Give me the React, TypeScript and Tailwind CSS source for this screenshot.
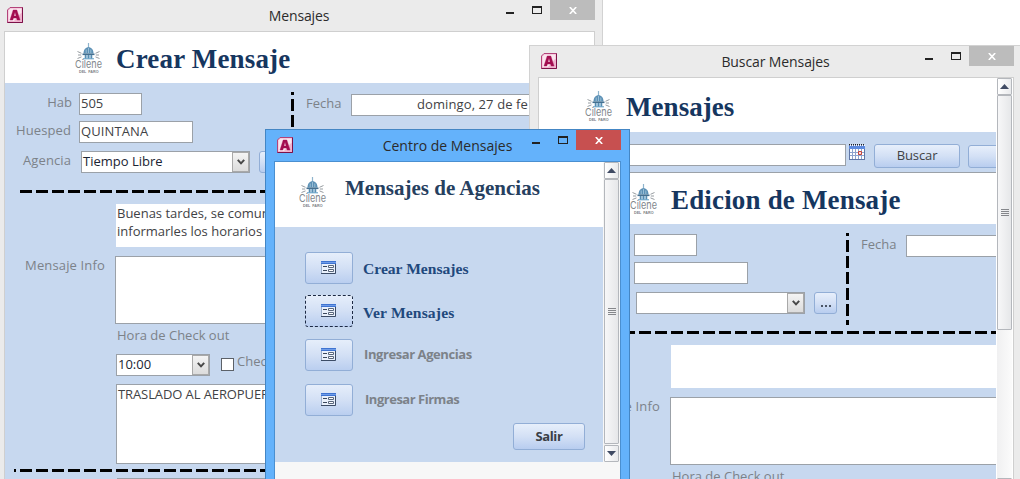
import type { ReactNode } from "react";

const ui = "font-['Open_Sans','Noto_Sans',sans-serif]";
const serif = "font-['Liberation_Serif','Times_New_Roman',serif] font-bold text-[#16365f]";
const box = "shrink-0 border border-[#9ba1a8] bg-white";
const btnFill = "shrink-0 rounded-[3px] border bg-gradient-to-b from-[#e7effb] via-[#d3e0f5] to-[#b8cdef]";
const btn = `${btnFill} border-[#92aed6]`;
const label = "whitespace-nowrap leading-[18px] text-[#7c8289]";

function AccessIcon() {
  return (
    <svg className="block size-4 shrink-0" viewBox="0 0 16 16">
      <path d="M3 .5h12.500v15H.5V3z" fill="#f0b4cf" stroke="#b3447a" />
      <path d="M3.500 1.500h11v4L7 14H1.500V3.500z" fill="#fbe6ef" />
      <path d="M15.500.5v15H.5" fill="none" stroke="#7c1148" />
      <path
        fillRule="evenodd"
        d="M3 13L6.200 3h3.600L13 13h-2.800l-.6-2H6.400l-.6 2zM6.900 9h2.200L8 5.200z"
        fill="#a30d50"
        stroke="#a30d50"
        strokeWidth=".4"
      />
    </svg>
  );
}

function Logo() {
  return (
    <svg className="block h-8 w-7 shrink-0 overflow-visible" viewBox="0 0 28 32">
      <path d="M13.500 1v5" stroke="#8fb4cd" strokeWidth="1.200" />
      <path d="M8.500 11.500C8.500 7.500 10.500 5.200 13.500 5.200s5 2.300 5 6.300z" fill="#5b90b5" />
      <path d="M11.200 11V7.500M13.500 11V6M15.800 11V7.500" stroke="#b5d3e4" strokeWidth=".7" />
      <path d="M7.500 12.300h12" stroke="#456f8f" strokeWidth="1.600" />
      <path d="M9.500 13h8v3.500h-8z" fill="#9dc0d8" />
      <path d="M10.500 13v3.500M13.500 13v3.500M16.500 13v3.500" stroke="#4f86ab" strokeWidth=".9" />
      <path d="M8 16.800h11" stroke="#5b9ac4" strokeWidth="1" />
      <path d="M2.500 9.500l4 1.800M3 13h3.200M2.500 16.500l4-1.600M24.500 9.500l-4 1.800M24 13h-3.200M24.500 16.500l-4-1.600" stroke="#8b9196" strokeWidth=".9" />
      <text x="0" y="26" textLength="27" lengthAdjust="spacingAndGlyphs" fontSize="11" fontFamily="Inter, sans-serif" fontWeight="400" fill="#82878c">
        Cilene
      </text>
      <text x="4" y="31.200" textLength="19.500" lengthAdjust="spacingAndGlyphs" fontSize="4.400" wordSpacing="1.200" fontWeight="700" fontFamily="Liberation Sans, sans-serif" fill="#7b8084">
        DEL FARO
      </text>
    </svg>
  );
}

function FormIcon() {
  return (
    <svg className="mr-px block h-[13px] w-[15px]" viewBox="0 0 15 13">
      <path d="M.5.5h14v12H.5z" fill="#eaf1fc" stroke="#9db0cd" />
      <path d="M0 0h15v3H0z" fill="#3f74d1" />
      <path d="M0 1h15v1H0z" fill="#6f9ce8" />
      <path d="M14.500 3v9.500H0" fill="none" stroke="#3c4c66" />
      <path d="M2 5.500h4M2 9.500h4" stroke="#3b485c" />
      <path d="M7.500 4.500h5v2h-5zM7.500 8.500h5v2h-5z" fill="#fff" stroke="#59677c" />
    </svg>
  );
}

function CalendarIcon() {
  return (
    <svg className="block size-4 shrink-0" viewBox="0 0 16 16">
      <path d="M0 1h16v15H0z" fill="#5f76a6" />
      <path d="M1 5h14v10H1z" fill="#fff" />
      <path d="M0 2h16v3H0z" fill="#5d8be0" />
      <path d="M0 .5h16" stroke="#222" strokeDasharray="1 1" />
      <path d="M1 1.500h15" stroke="#fff" strokeDasharray="1 1" />
      <path d="M1 8.500h14M1 11.500h14M3.500 5v10M6.500 5v10M9.500 5v10M12.500 5v10" stroke="#8da3cd" />
      <path d="M9.500 7.500h3v3h-3z" fill="#fbdcd8" stroke="#c9453a" />
    </svg>
  );
}

function Window({
  title,
  titleClass,
  frame,
  active = false,
  children,
}: {
  title: string;
  titleClass: string;
  frame: string;
  active?: boolean;
  children: ReactNode;
}) {
  return (
    <section
      className={`absolute flex flex-col border ${frame} ${
        active ? "border-[#4486c4] bg-[#64b2fb]" : "border-[#d2d2d2] bg-[#ebebeb]"
      }`}
    >
      <header className="grid h-[31px] shrink-0 grid-cols-[1fr_auto_1fr]">
        <div className="pl-[11px] pt-[7px]">
          <AccessIcon />
        </div>
        <h1 className={`whitespace-nowrap text-[14px] leading-[31px] text-[#2b2b2b] ${titleClass}`}>{title}</h1>
        <div className={`flex justify-end ${active ? "pr-2" : "pr-[7px]"}`}>
          <span className="mr-[18px] mt-3 h-[2px] w-2 bg-[#222]" />
          <span className="mr-2 mt-[6px] h-2 w-[10px] border border-t-2 border-[#222]" />
          <span className={`flex h-5 w-[45px] items-center justify-center ${active ? "bg-[#c75050]" : "bg-[#bcbcbc]"}`}>
            <svg className="block h-[7px] w-2" viewBox="0 0 8 7">
              <path d="M.8 0l6.400 7M7.200 0L.8 7" stroke="#fff" strokeWidth="1.600" />
            </svg>
          </span>
        </div>
      </header>
      <div
        className={`ml-2 flex min-h-0 flex-1 border border-b-0 ${
          active ? "mr-2 border-[#4a8fd0] bg-[#f7f7f7]" : "mr-[7px] border-[#cfcfcf] bg-white"
        }`}
      >
        {children}
      </div>
    </section>
  );
}

function ScrollArrow({ down = false }: { down?: boolean }) {
  return (
    <div className="flex h-[17px] shrink-0 items-center justify-center rounded-[1px] border border-[#b4b7bc] bg-gradient-to-r from-white to-[#e9eaec]">
      <svg className="block h-[5px] w-[9px]" viewBox="0 0 9 5">
        <path d={down ? "M0 0h9L4.500 5z" : "M0 5h9L4.500 0z"} fill="#3f4a63" />
      </svg>
    </div>
  );
}

function ScrollBar({ thumb, className }: { thumb: string; className: string }) {
  return (
    <div className={`flex w-[15px] shrink-0 flex-col bg-gradient-to-r from-[#f0f0f1] to-[#fbfbfb] ${className}`}>
      <ScrollArrow />
      <div
        className={`flex shrink-0 flex-col items-center justify-center gap-px rounded-[1px] border border-[#b4b7bc] bg-gradient-to-r from-[#f7f7f8] to-[#e6e7e9] ${thumb}`}
      >
        <span className="h-px w-2 bg-[#85878b]" />
        <span className="h-px w-2 bg-[#85878b]" />
        <span className="h-px w-2 bg-[#85878b]" />
        <span className="h-px w-2 bg-[#85878b]" />
      </div>
      <div className="flex-1" />
      <ScrollArrow down />
    </div>
  );
}

function Combo({ value, className }: { value: string; className: string }) {
  return (
    <div className={`${box} flex h-[22px] ${className}`}>
      <span className="flex-1 pl-px leading-[18px] text-[#1a2433]">{value}</span>
      <span className="flex w-[17px] items-center justify-center border border-[#a9a9a9] bg-gradient-to-b from-[#f4f4f4] to-[#dcdcdc]">
        <svg className="block h-[6px] w-2" viewBox="0 0 8 6">
          <path d="M.8 .8L4 4.300 7.200.8" fill="none" stroke="#484848" strokeWidth="2" />
        </svg>
      </span>
    </div>
  );
}

type FormProps = {
  title: string;
  room?: string;
  guest?: string;
  agency?: string;
  date?: string;
  message?: string[];
  checkout?: string;
  notes?: string;
};

function MessageForm({ title, room, guest, agency = "", date, message = [], checkout = "", notes }: FormProps) {
  return (
    <div className="flex h-[520px] w-[589px] shrink-0 flex-col bg-[#c7d8ef] text-[13px] text-[#3f4245]">
      <div className="flex h-[51px] shrink-0 bg-white pl-[70px] pt-[10px]">
        <Logo />
        <h2 className={`-mt-[10px] ml-[13px] whitespace-nowrap text-[27px] leading-[54px] tracking-[0.17px] ${serif}`}>
          {title}
        </h2>
      </div>

      <div className="flex h-[107px] shrink-0">
        <div className="w-[286px] pt-[10px]">
          <div className="flex">
            <span className={`${label} w-[67px] text-right`}>Hab</span>
            <div className={`${box} ml-[7px] h-[22px] w-[63px] pl-px leading-[18px]`}>{room}</div>
          </div>
          <div className="mt-[6px] flex">
            <span className={`${label} w-[66px] text-right tracking-[0.1px]`}>Huesped</span>
            <div className={`${box} ml-2 h-[22px] w-[114px] pl-px leading-[18px] tracking-[0.1px]`}>{guest}</div>
          </div>
          <div className="mt-2 flex">
            <span className={`${label} w-[66px] text-right tracking-[0.1px]`}>Agencia</span>
            <Combo value={agency} className="ml-[10px] w-[169px]" />
            <div className={`${btn} ml-[9px] flex h-[22px] w-[23px] items-center justify-center gap-[2px] pt-[6px]`}>
              <i className="size-[2px] bg-[#4c5666]" />
              <i className="size-[2px] bg-[#4c5666]" />
              <i className="size-[2px] bg-[#4c5666]" />
            </div>
          </div>
        </div>
        <div className="mt-[9px] h-[92px] w-[3px] bg-[repeating-linear-gradient(180deg,#000_0_3px,transparent_3px_7px,#000_7px_16px)]" />
        <div className="flex flex-1 pl-3 pt-[11px]">
          <span className={`${label} w-[45px]`}>Fecha</span>
          <div className={`${box} h-[22px] w-[236px] whitespace-nowrap pl-[65px] leading-[18px] tracking-[0.1px]`}>
            {date}
          </div>
        </div>
      </div>

      <div className="ml-[15px] h-[3px] shrink-0 bg-[repeating-linear-gradient(90deg,#000_0_12px,transparent_12px_16px)]" />

      <div className="ml-[111px] mt-[11px] h-[43px] shrink-0 whitespace-nowrap bg-white pl-[1px] leading-[18px]">
        {message.map((line) => (
          <p key={line}>{line}</p>
        ))}
      </div>

      <div className="mt-[9px] flex h-[68px] shrink-0">
        <span className={`${label} w-[100px] text-right tracking-[0.15px]`}>Mensaje Info</span>
        <div className={`${box} ml-[10px] w-[479px]`} />
      </div>

      <div className="ml-[111px]">
        <p className={`${label} mt-[2px] pl-px`}>Hora de Check out</p>
        <div className="mt-[8px] flex h-[24px]">
          <Combo value={checkout} className="mt-[2px] w-[94px]" />
          <span className="ml-[11px] mt-[6px] size-[13px] border border-[#5c6168] bg-white" />
          <span className={`${label} ml-[3px]`}>Check in</span>
        </div>
        <div className={`${box} mt-[8px] h-[80px] whitespace-nowrap pl-px leading-[18px] tracking-[-0.1px]`}>{notes}</div>
      </div>

      <div className="ml-[9px] mt-[5px] h-[3px] shrink-0 bg-[repeating-linear-gradient(90deg,#000_0_2px,transparent_2px_6px,#000_6px_16px)]" />
      <div className={`${box} ml-[112px] mt-[6px] h-[22px]`} />
    </div>
  );
}

function MenuRow({ text, className, textClass, focused = false }: { text: string; className: string; textClass: string; focused?: boolean }) {
  return (
    <div className={`flex ${className}`}>
      <div
        className={`flex h-8 w-12 justify-center bg-origin-border pt-[8px] ${
          focused ? `${btnFill} border-dashed border-[#1d2a44]` : btn
        }`}
      >
        <FormIcon />
      </div>
      <span className={`whitespace-nowrap ${textClass}`}>{text}</span>
    </div>
  );
}

export default function App() {
  const menuSerif = "font-['Liberation_Serif','Times_New_Roman',serif] font-bold text-[15.6px] text-[#1f497d]";
  return (
    <main className={`relative h-[479px] w-[1020px] overflow-hidden bg-white ${ui}`}>
      <Window title="Mensajes" titleClass="tracking-[-0.15px]" frame="-left-[5px] -top-px h-[490px] w-[608px]">
        <div className="flex-1 overflow-hidden">
          <MessageForm
            title="Crear Mensaje"
            room="505"
            guest="QUINTANA"
            agency="Tiempo Libre"
            date="domingo, 27 de fe"
            message={["Buenas tardes, se comunica", "informarles los horarios"]}
            checkout="10:00"
            notes="TRASLADO AL AEROPUERTO"
          />
        </div>
      </Window>

      <Window title="Buscar Mensajes" titleClass="tracking-[-0.1px]" frame="left-[529px] top-[45px] h-[450px] w-[493px]">
        <div className="flex min-w-0 flex-1 flex-col overflow-hidden bg-[#c7d8ef] text-[13px] text-[#3f4245]">
          <div className="flex h-[54px] shrink-0 bg-white pl-[46px] pt-[12px]">
            <Logo />
            <h2 className={`-mt-[12px] ml-[13px] whitespace-nowrap text-[27px] leading-[58px] tracking-[0.05px] ${serif}`}>
              Mensajes
            </h2>
          </div>
          <div className="flex h-10 shrink-0 pt-3">
            <div className={`${box} ml-[60px] h-[22px] w-[247px]`} />
            <div className="ml-[3px]">
              <CalendarIcon />
            </div>
            <div className={`${btn} ml-[9px] h-[24px] w-[86px] text-center leading-[20px] tracking-[-0.1px]`}>Buscar</div>
            <div className={`${btn} ml-2 mt-px h-[23px] w-[86px]`} />
          </div>
          <div className="ml-[21px] border-t border-[#9ba1a8]">
            <MessageForm title="Edicion de Mensaje" />
          </div>
        </div>
        <ScrollBar thumb="h-[235px]" className="ml-px mr-px h-[417px]" />
      </Window>

      <Window
        active
        title="Centro de Mensajes"
        titleClass="tracking-[0px]"
        frame="left-[265px] top-[129px] h-[380px] w-[365px]"
      >
        <div className="h-[300px] flex-1 overflow-hidden bg-[#c7d8ef] text-[13px]">
          <div className="flex h-[65px] bg-white pl-6 pt-[14px]">
            <Logo />
            <h2 className="-mt-[14px] ml-[18px] whitespace-nowrap font-['Liberation_Serif','Times_New_Roman',serif] text-[21px] font-bold leading-[52px] text-[#26405f]">
              Mensajes de Agencias
            </h2>
          </div>
          <div className="pl-[30px] pt-[25px]">
            <MenuRow text="Crear Mensajes" className="h-[43px]" textClass={`ml-[10px] leading-[33px] ${menuSerif}`} />
            <MenuRow focused text="Ver Mensajes" className="h-[44px]" textClass={`ml-[10px] leading-[35px] tracking-[0.15px] ${menuSerif}`} />
            <MenuRow text="Ingresar Agencias" className="h-[45px]" textClass="ml-[11px] font-bold leading-[30px] tracking-[-0.42px] text-[#7c8289]" />
            <MenuRow text="Ingresar Firmas" className="h-[39px]" textClass="ml-[12px] font-bold leading-[30px] tracking-[-0.48px] text-[#7c8289]" />
            <div className={`${btn} ml-[208px] h-[27px] w-[72px] text-center font-bold leading-[24px] tracking-[-0.4px] text-[#3a3f46]`}>
              Salir
            </div>
          </div>
        </div>
        <ScrollBar thumb="h-[265px]" className="ml-px mr-px h-[300px]" />
      </Window>
    </main>
  );
}
